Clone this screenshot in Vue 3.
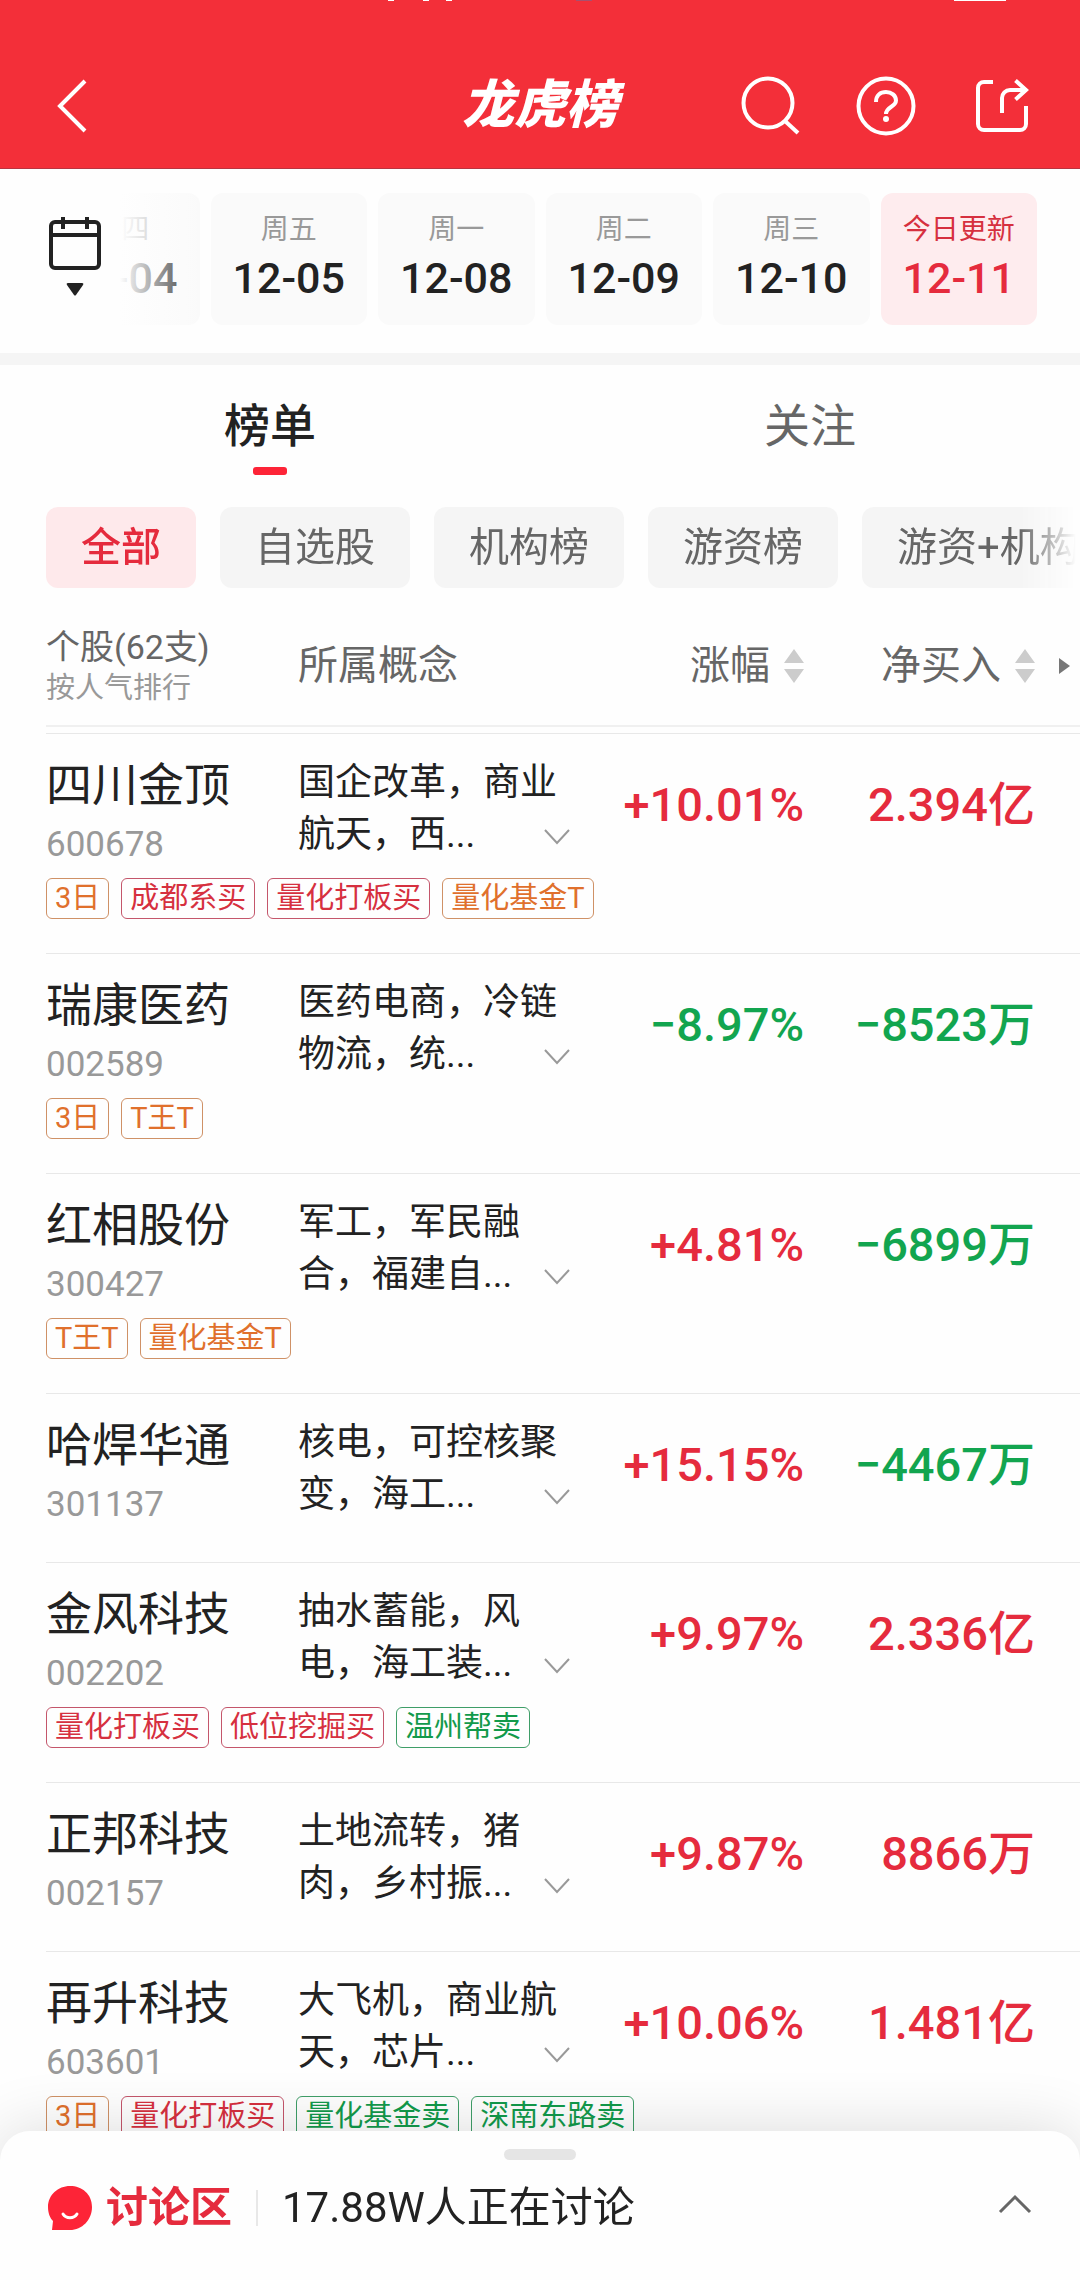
<template>
  <div class="page">
    <header class="topbar">
      <svg class="topbar__status" viewBox="0 0 640 2" aria-hidden="true">
        <path d="M4 0h6M39 0h6M62 0h6M570 0h52" stroke="#fff" stroke-width="2" />
        <path d="M192 0h16" stroke="#a8506e" stroke-width="2" />
      </svg>
      <button class="icon-btn topbar__back" type="button" aria-label="返回">
        <svg width="40" height="56" viewBox="0 0 40 56">
          <path d="M37 3L12 28l25 25" fill="none" stroke="#fff" stroke-width="4" />
        </svg>
      </button>
      <h1 class="topbar__title">龙虎榜</h1>
      <div class="topbar__actions">
        <button class="icon-btn" type="button" aria-label="搜索">
          <svg class="line-icon" width="60" height="60" viewBox="0 0 60 60">
            <circle cx="28" cy="27" r="24.5" />
            <path d="M45 45l13 12" />
          </svg>
        </button>
        <button class="icon-btn" type="button" aria-label="帮助">
          <svg class="line-icon" width="60" height="60" viewBox="0 0 60 60">
            <circle cx="30" cy="30" r="27.5" />
            <path d="M20 26C20 19 24.500 16 30 16S40 19.500 40 24.500C40 31 30 30.500 30 38" />
            <circle class="line-icon__dot" cx="30" cy="43" r="3" />
          </svg>
        </button>
        <button class="icon-btn" type="button" aria-label="分享">
          <svg class="line-icon" width="60" height="60" viewBox="0 0 60 60">
            <path d="M21 6h-9a6 6 0 0 0-6 6v36a6 6 0 0 0 6 6h36a6 6 0 0 0 6-6V30" />
            <path d="M30 37V22a8 8 0 0 1 8-8h16M43.500 4.500L54 14l-10.500 9.500" />
          </svg>
        </button>
      </div>
    </header>

    <section class="dates">
      <div class="dates__track">
        <button
          v-for="item in dates"
          :key="item.date"
          type="button"
          class="date"
          :class="{ 'date--active': item.date === activeDate }"
          @click="activeDate = item.date"
        >
          <span class="date__label">{{ item.label }}</span>
          <span class="date__value">{{ item.date }}</span>
        </button>
      </div>
      <button class="icon-btn dates__calendar" type="button" aria-label="选择日期">
        <svg width="54" height="90" viewBox="0 0 54 90">
          <rect x="3" y="6" width="48" height="46" rx="4" fill="none" stroke="#222" stroke-width="4" />
          <path d="M3 19h48M15 1v12M39 1v12" fill="none" stroke="#222" stroke-width="4" />
          <path d="M20 67h14q2 0 1 2l-7 10q-1 1-2 0l-7-10q-1-2 1-2z" fill="#222" />
        </svg>
      </button>
    </section>

    <nav class="tabs">
      <button
        v-for="tab in tabs"
        :key="tab"
        type="button"
        class="tab"
        :class="{ 'tab--active': tab === activeTab }"
        @click="activeTab = tab"
      >
        {{ tab }}
      </button>
    </nav>

    <div class="filters">
      <button
        v-for="filter in filters"
        :key="filter"
        type="button"
        class="filter"
        :class="{ 'filter--active': filter === activeFilter }"
        @click="activeFilter = filter"
      >
        {{ filter }}
      </button>
    </div>

    <table class="stocks">
      <thead>
        <tr class="stocks__head">
          <th>
            <span class="stocks__count">个股(62支)</span>
            <span class="stocks__order">按人气排行</span>
          </th>
          <th>所属概念</th>
          <th class="stocks__sort">
            涨幅
            <svg width="20" height="34" viewBox="0 0 20 34" fill="#ccc">
              <path d="M10 0l10 14H0zM0 20h20L10 34z" />
            </svg>
          </th>
          <th class="stocks__sort stocks__sort--last">
            净买入
            <svg width="20" height="34" viewBox="0 0 20 34" fill="#ccc">
              <path d="M10 0l10 14H0zM0 20h20L10 34z" />
            </svg>
            <svg class="stocks__more" width="11" height="16" viewBox="0 0 11 16" fill="#777">
              <path d="M0 0l11 8-11 8z" />
            </svg>
          </th>
        </tr>
      </thead>
      <tbody>
        <tr v-for="stock in stocks" :key="stock.code" class="stock">
          <td>
            <div class="stock__name">{{ stock.name }}</div>
            <div class="stock__code">{{ stock.code }}</div>
          </td>
          <td>
            <div class="stock__concept">
              {{ stock.concept }}
              <button class="icon-btn stock__expand" type="button" aria-label="展开">
                <svg width="26" height="16" viewBox="0 0 26 16">
                  <path d="M1 1l12 13L25 1" fill="none" stroke="#999" stroke-width="2" />
                </svg>
              </button>
            </div>
          </td>
          <td class="stock__number" :class="trend(stock.change)">{{ stock.change }}</td>
          <td class="stock__number stock__number--last" :class="trend(stock.net)">{{ stock.net }}</td>
          <td v-if="stock.tags.length" class="stock__tags">
            <span v-for="tag in stock.tags" :key="tag" class="tag" :class="tagType(tag)">{{ tag }}</span>
          </td>
        </tr>
      </tbody>
    </table>

    <button class="sheet" type="button">
      <span class="sheet__handle"></span>
      <span class="sheet__row">
        <svg width="44" height="46" viewBox="0 0 44 46">
          <path d="M22 1C10 1 0 10 0 22c0 6 2 11 5 14L4 45h18c12 0 22-10 22-23S34 1 22 1z" fill="#fd2437" />
          <path d="M15 29c3 5 11 5 14 0" fill="none" stroke="#fff" stroke-width="3" stroke-linecap="round" />
        </svg>
        <strong class="sheet__title">讨论区</strong>
        <span class="sheet__text">17.88W人正在讨论</span>
        <svg class="sheet__arrow" width="34" height="28" viewBox="0 0 34 28">
          <path d="M2 18L17 3l15 15" fill="none" stroke="#666" stroke-width="3" />
        </svg>
      </span>
    </button>
  </div>
</template>

<script setup>
import { ref } from 'vue';

const dates = [
  { label: '周四', date: '12-04' },
  { label: '周五', date: '12-05' },
  { label: '周一', date: '12-08' },
  { label: '周二', date: '12-09' },
  { label: '周三', date: '12-10' },
  { label: '今日更新', date: '12-11' }
];
const tabs = ['榜单', '关注'];
const filters = ['全部', '自选股', '机构榜', '游资榜', '游资+机构'];

const activeDate = ref('12-11');
const activeTab = ref('榜单');
const activeFilter = ref('全部');

const stocks = [
  {
    name: '四川金顶',
    code: '600678',
    concept: '国企改革，商业航天，西...',
    change: '+10.01%',
    net: '2.394亿',
    tags: ['3日', '成都系买', '量化打板买', '量化基金T']
  },
  {
    name: '瑞康医药',
    code: '002589',
    concept: '医药电商，冷链物流，统...',
    change: '−8.97%',
    net: '−8523万',
    tags: ['3日', 'T王T']
  },
  {
    name: '红相股份',
    code: '300427',
    concept: '军工，军民融合，福建自...',
    change: '+4.81%',
    net: '−6899万',
    tags: ['T王T', '量化基金T']
  },
  {
    name: '哈焊华通',
    code: '301137',
    concept: '核电，可控核聚变，海工...',
    change: '+15.15%',
    net: '−4467万',
    tags: []
  },
  {
    name: '金风科技',
    code: '002202',
    concept: '抽水蓄能，风电，海工装...',
    change: '+9.97%',
    net: '2.336亿',
    tags: ['量化打板买', '低位挖掘买', '温州帮卖']
  },
  {
    name: '正邦科技',
    code: '002157',
    concept: '土地流转，猪肉，乡村振...',
    change: '+9.87%',
    net: '8866万',
    tags: []
  },
  {
    name: '再升科技',
    code: '603601',
    concept: '大飞机，商业航天，芯片...',
    change: '+10.06%',
    net: '1.481亿',
    tags: ['3日', '量化打板买', '量化基金卖', '深南东路卖']
  }
];

const trend = (value) => (value.startsWith('−') ? 'is-down' : 'is-up');

const tagType = (tag) => {
  if (tag.endsWith('买')) return 'tag--buy';
  if (tag.endsWith('卖')) return 'tag--sell';
  return 'tag--other';
};
</script>

<style>
body {
  margin: 0;
  background: #fefefe;
}
</style>

<style scoped>
.page {
  min-height: 100vh;
  overflow-x: hidden;
  color: #222;
  font-family: Roboto, 'Noto Sans CJK SC', sans-serif;
}
button {
  margin: 0;
  padding: 0;
  border: 0;
  background: none;
  color: inherit;
  font-family: inherit;
  cursor: pointer;
}
svg {
  display: block;
  flex: none;
}
.icon-btn {
  display: block;
}

/* top bar */
.topbar {
  position: relative;
  display: grid;
  grid-template-columns: 1fr auto 1fr;
  align-items: center;
  box-sizing: border-box;
  height: 169px;
  padding: 43px 48px 0;
  border-bottom: 1px solid #b93440;
  background: #f32f39;
}
.topbar__status {
  position: absolute;
  top: 0;
  right: 56px;
  width: 640px;
  height: 2px;
}
.topbar__back {
  justify-self: start;
}
.topbar__title {
  margin: 0;
  color: #fff;
  font-size: 52px;
  font-style: italic;
  font-weight: 900;
  line-height: 60px;
}
.topbar__actions {
  display: flex;
  justify-content: flex-end;
  gap: 56px;
}
.line-icon {
  fill: none;
  stroke: #fff;
  stroke-width: 4;
}
.line-icon__dot {
  fill: #fff;
  stroke: none;
}

/* trading days */
.dates {
  position: relative;
  padding: 24px 43px 28px;
  border-bottom: 12px solid #f5f5f5;
}
.dates__track {
  display: grid;
  grid-template-columns: repeat(6, 1fr);
  gap: 11px;
}
.date {
  display: flex;
  flex-direction: column;
  align-items: center;
  gap: 5px;
  height: 132px;
  padding-top: 19px;
  border-radius: 12px;
  background: #fafafa;
}
.date__label {
  color: #999;
  font-size: 28px;
  line-height: 36px;
}
.date__value {
  font-size: 43px;
  font-weight: 500;
  line-height: 50px;
}
.date--active {
  background: #feecee;
  color: #e52b3d;
}
.date--active .date__label {
  color: #d6303f;
}
.dates__calendar {
  position: absolute;
  top: 0;
  bottom: 0;
  left: 0;
  padding: 0 104px 0 48px;
  background: linear-gradient(to right, #fefefe 120px, rgba(254, 254, 254, 0) 206px);
}

/* tabs */
.tabs {
  display: flex;
  padding-top: 31px;
}
.tab {
  display: flex;
  flex: 1;
  flex-direction: column;
  align-items: center;
  gap: 11px;
  color: #666;
  font-size: 46px;
  line-height: 60px;
}
.tab::after {
  content: '';
  width: 34px;
  height: 8px;
  border-radius: 3px;
}
.tab--active {
  color: #222;
  font-weight: 500;
}
.tab--active::after {
  background: #fd2437;
}

/* filters */
.filters {
  display: flex;
  gap: 24px;
  margin-top: 32px;
  padding-left: 46px;
  overflow: hidden;
  -webkit-mask-image: linear-gradient(to left, transparent 4px, #000 60px);
  mask-image: linear-gradient(to left, transparent 4px, #000 60px);
}
.filter {
  flex: none;
  height: 81px;
  padding: 0 35px;
  border-radius: 12px;
  background: #f5f5f5;
  color: #666;
  font-size: 40px;
  line-height: 80px;
}
.filter--active {
  background: #fee9eb;
  color: #e52b3d;
  font-weight: 500;
}

/* stock table */
.stocks,
.stocks thead,
.stocks tbody {
  display: block;
}
.stocks {
  margin: 19px 0 0 46px;
}
.stocks thead {
  margin-bottom: 6px;
}
.stocks th,
.stocks td {
  padding: 0;
  text-align: left;
}
.stocks__head,
.stock {
  display: grid;
  grid-template-columns: 252px 1fr 224px 276px;
  box-sizing: border-box;
}
.stocks__head {
  align-items: center;
  height: 120px;
  border-bottom: 2px solid #f0f0f0;
  color: #666;
  font-size: 40px;
  line-height: 56px;
}
.stocks__head th {
  font-weight: 400;
}
.stocks__count,
.stocks__order {
  display: block;
  font-size: 34px;
  line-height: 44px;
}
.stocks__order {
  color: #999;
  font-size: 29px;
  line-height: 38px;
}
.stocks__head .stocks__sort {
  display: flex;
  align-items: center;
  justify-content: flex-end;
  gap: 14px;
}
.stocks__head .stocks__sort--last {
  padding-right: 10px;
}
.stocks__more {
  margin-left: 10px;
}
.stock {
  align-content: start;
  align-items: start;
  min-height: 169px;
  padding: 23px 0 34px;
  border-top: 1px solid #e8e8e8;
}
.stock__name {
  font-size: 46px;
  line-height: 56px;
}
.stock__code {
  margin-top: 11px;
  color: #999;
  font-size: 35px;
  line-height: 42px;
}
.stock__concept {
  position: relative;
  width: 262px;
  padding-right: 10px;
  font-size: 37px;
  line-height: 52px;
}
.stock__expand {
  position: absolute;
  right: 0;
  bottom: 16px;
}
.stocks .stock__number {
  padding-top: 20px;
  font-size: 47px;
  font-weight: 500;
  line-height: 56px;
  text-align: right;
}
.stocks .stock__number--last {
  padding-right: 45px;
}
.is-up {
  color: #e52b3d;
}
.is-down {
  color: #12a54f;
}
.stock__tags {
  display: flex;
  grid-column: 1 / -1;
  gap: 12px;
  margin-top: 12px;
}
.tag {
  padding: 0 8px;
  border: 1px solid;
  border-radius: 6px;
  font-size: 29px;
  line-height: 39px;
}
.tag--buy {
  border-color: #c4566b;
  color: #d6303f;
}
.tag--sell {
  border-color: #3f9e68;
  color: #129a4b;
}
.tag--other {
  border-color: #cf9166;
  color: #e0702c;
}

/* discussion sheet */
.sheet {
  position: fixed;
  right: 0;
  bottom: 0;
  left: 0;
  display: flex;
  flex-direction: column;
  align-items: center;
  gap: 20px;
  padding: 18px 48px 44px;
  border-radius: 30px 30px 0 0;
  background: #fefefe;
  box-shadow: 0 0 64px rgba(0, 0, 0, 0.14);
  font-size: 42px;
  line-height: 56px;
}
.sheet__handle {
  width: 72px;
  height: 11px;
  border-radius: 6px;
  background: #e5e5e5;
}
.sheet__row {
  display: flex;
  align-items: center;
  width: 100%;
}
.sheet__title {
  margin-left: 14px;
  color: #e52b3d;
  font-weight: 700;
}
.sheet__text {
  display: flex;
  align-items: center;
  margin-left: 24px;
}
.sheet__text::before {
  content: '';
  width: 2px;
  height: 36px;
  margin-right: 24px;
  background: #e8e8e8;
}
.sheet__arrow {
  margin-left: auto;
}
</style>
